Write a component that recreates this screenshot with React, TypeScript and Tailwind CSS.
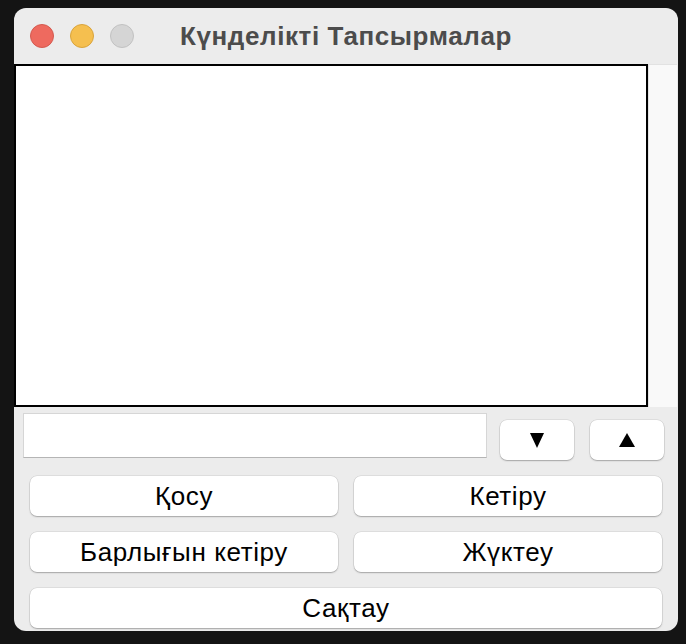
import { useState } from 'react';

const btn =
  "h-10 rounded-[7px] bg-white text-black text-[26px] tracking-[0.6px] leading-none shadow-[0_0_0_0.5px_rgba(0,0,0,0.12),0_1px_1.5px_rgba(0,0,0,0.25)] flex items-center justify-center";

export default function App() {
  const [tasks, setTasks] = useState<string[]>([]);
  const [text, setText] = useState('');

  const add = () => {
    if (text.trim()) {
      setTasks([...tasks, text.trim()]);
      setText('');
    }
  };

  return (
    <div className="w-[686px] h-[644px] bg-[#141414] pt-2 pl-[14px]" style={{ fontFamily: '"Liberation Sans", Arial, sans-serif' }}>
      <div className="w-[664px] h-[623px] rounded-[12px] bg-[#ececec] overflow-hidden flex flex-col">
        {/* Title bar */}
        <div className="relative h-[56px] flex items-center shrink-0">
          <div className="flex gap-4 pl-4">
            <span className="w-6 h-6 rounded-full bg-[#ee6a5f] border border-[#d45a50]" />
            <span className="w-6 h-6 rounded-full bg-[#f5bf4f] border border-[#d9a43c]" />
            <span className="w-6 h-6 rounded-full bg-[#d5d5d5] border border-[#c2c2c2]" />
          </div>
          <div className="absolute inset-0 flex items-center justify-center pointer-events-none">
            <span className="text-[26px] font-bold text-[#4c4c4c] tracking-[0.6px]">Күнделікті Тапсырмалар</span>
          </div>
        </div>

        {/* List */}
        <div className="flex h-[343px] shrink-0">
          <div className="w-[634px] border-2 border-black bg-white overflow-hidden">
            {tasks.map((t, i) => (
              <div key={i} className="px-1 text-[20px] text-black">{t}</div>
            ))}
          </div>
          <div className="flex-1 bg-[#f9f9f9] border-l border-t border-[#e2e2e2] mr-px" />
        </div>

        {/* Entry row */}
        <div className="flex items-start mt-[6px] pl-[9px] pr-[14px]">
          <input
            value={text}
            onChange={(e) => setText(e.target.value)}
            className="w-[464px] h-[45px] bg-white border border-[#d6d6d6] border-b-[#b5b5b5] outline-none px-2 text-[20px]"
          />
          <button className={`${btn} w-[74px] mt-[7px] ml-[13px]`}>
            <svg width="14" height="15" viewBox="0 0 14 15"><polygon points="0,0 14,0 7,15" fill="#000" /></svg>
          </button>
          <button className={`${btn} w-[74px] mt-[7px] ml-4`}>
            <svg width="16" height="14" viewBox="0 0 16 14"><polygon points="8,0 16,14 0,14" fill="#000" /></svg>
          </button>
        </div>

        {/* Buttons */}
        <div className="grid grid-cols-2 gap-4 px-4 mt-4">
          <button onClick={add} className={btn}>Қосу</button>
          <button className={btn}>Кетіру</button>
          <button onClick={() => setTasks([])} className={btn}>Барлығын кетіру</button>
          <button className={btn}>Жүктеу</button>
          <button className={`${btn} col-span-2`}>Сақтау</button>
        </div>
      </div>
    </div>
  );
}
